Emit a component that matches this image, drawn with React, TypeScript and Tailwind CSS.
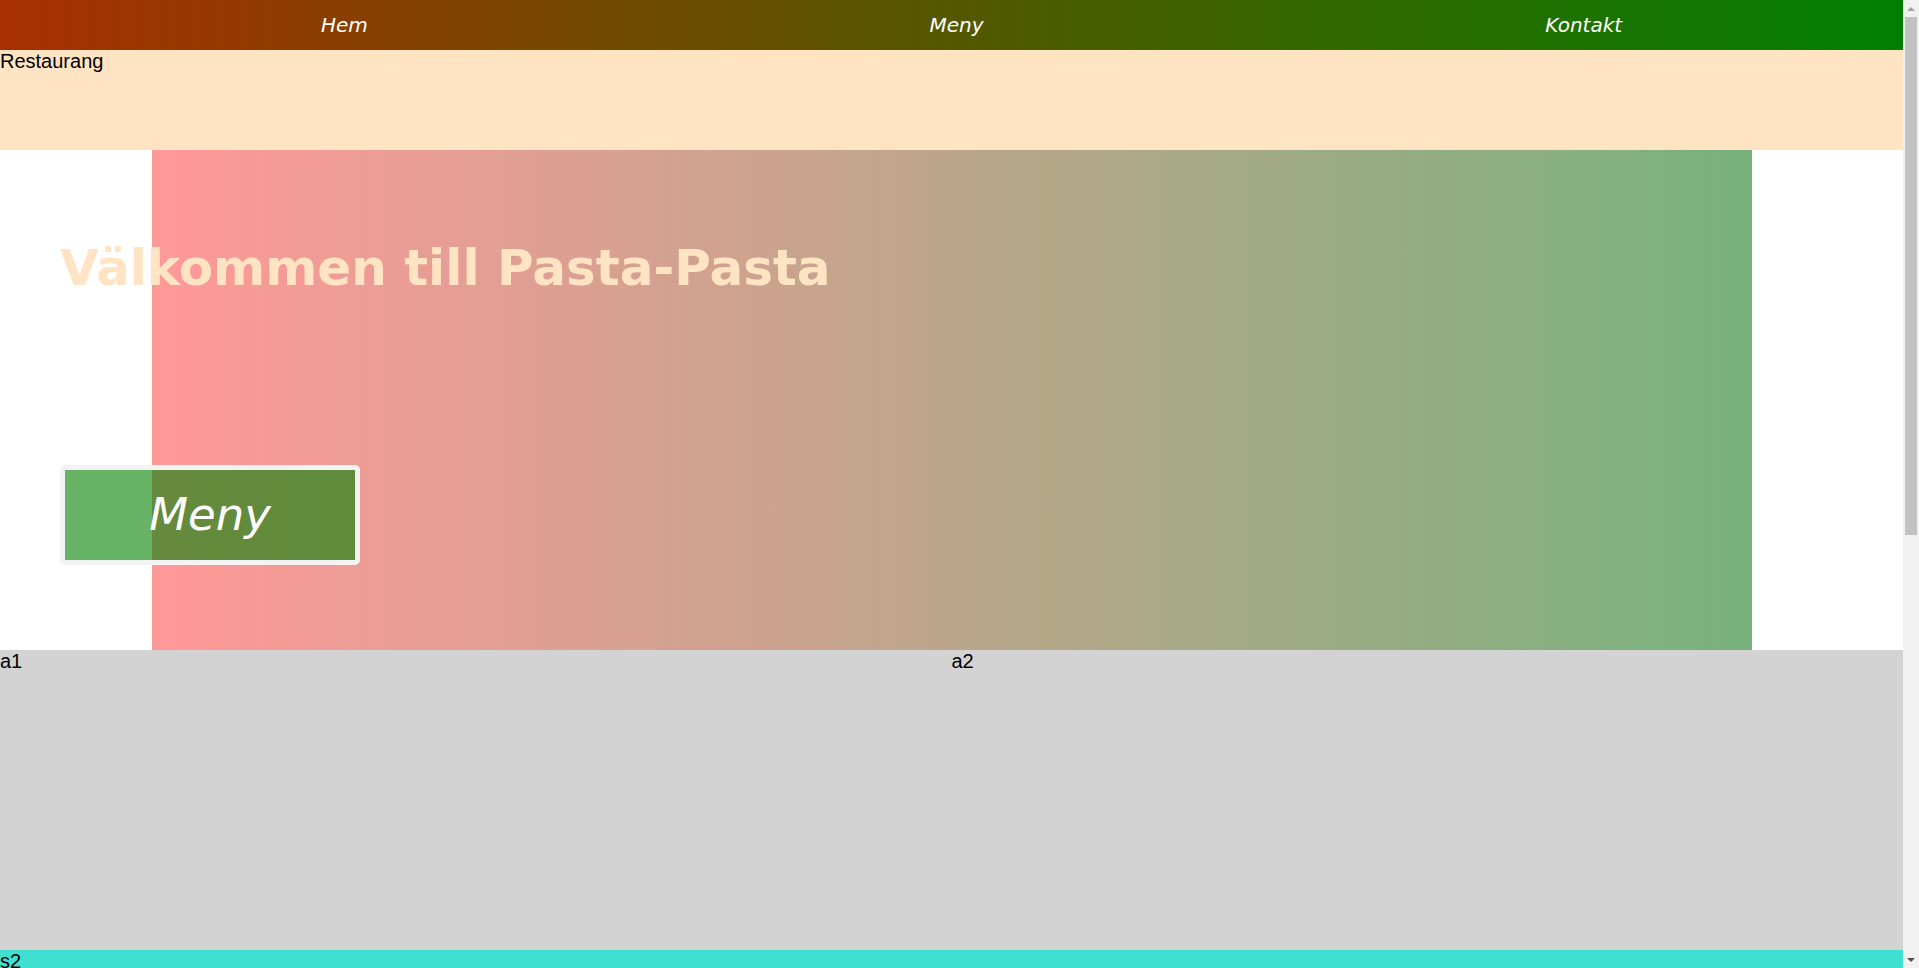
export default function App() {
  const navItems = ['Hem', 'Meny', 'Kontakt'];

  return (
    <div className="flex h-screen overflow-hidden bg-white font-['Liberation_Sans',Arial,sans-serif] text-[20px] leading-[1.15] text-black">
      {/* Page content */}
      <div className="min-w-0 flex-1">
        {/* Top navigation */}
        <nav className="h-[50px] bg-linear-to-r/srgb from-[#a83000] to-[#008000]">
          <ul className="flex h-full items-center justify-around pl-[40px]">
            {navItems.map((item) => (
              <li
                key={item}
                className="font-['DejaVu_Sans',Verdana,sans-serif] text-[20px] italic text-white"
              >
                {item}
              </li>
            ))}
          </ul>
        </nav>

        {/* Header */}
        <header className="h-[100px] bg-[#ffe4c4]">
          <p>Restaurang</p>
        </header>

        {/* Hero */}
        <section className="grid h-[500px]">
          <div className="col-start-1 row-start-1 mx-auto h-full w-[1600px] bg-linear-to-r/srgb from-[#ff9999] to-[#78b27c]" />
          <div className="col-start-1 row-start-1 flex flex-col pl-[60px]">
            <h1 className="mt-[88px] font-['DejaVu_Sans',Verdana,sans-serif] text-[50px] font-bold leading-[1.2] text-[#ffe4c4]">
              Välkommen till Pasta-Pasta
            </h1>
            <button className="mt-[167px] flex h-[100px] w-[300px] items-center justify-center rounded-[5px] border-[5px] border-[#f3f3f3] bg-[rgba(0,128,0,0.6)] font-['DejaVu_Sans',Verdana,sans-serif] text-[45px] italic text-white">
              Meny
            </button>
          </div>
        </section>

        {/* Articles */}
        <section className="grid h-[300px] grid-cols-2 bg-[#d3d3d3]">
          <div>a1</div>
          <div>a2</div>
        </section>

        {/* Second section */}
        <section className="h-[920px] bg-[#40e0d0]">
          <p>s2</p>
        </section>
      </div>

      {/* Scrollbar */}
      <div className="flex w-[16px] shrink-0 flex-col bg-[#f1f1f1]">
        <div className="flex h-[17px] items-center justify-center">
          <div className="h-0 w-0 border-x-[4px] border-b-[4px] border-x-transparent border-b-[#a3a3a3]" />
        </div>
        <div className="flex-1 px-[2px]">
          <div className="h-[518px] bg-[#c1c1c1]" />
        </div>
        <div className="flex h-[16px] items-center justify-center">
          <div className="h-0 w-0 border-x-[4px] border-t-[4px] border-x-transparent border-t-[#505050]" />
        </div>
      </div>
    </div>
  );
}
